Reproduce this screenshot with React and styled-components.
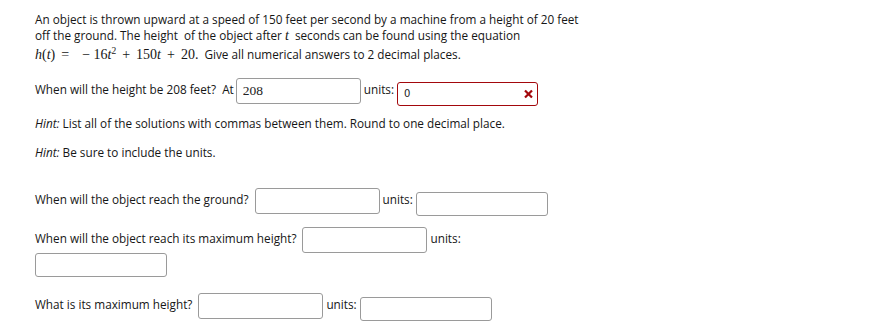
import React from "react";
import styled, { createGlobalStyle } from "styled-components";

const Global = createGlobalStyle`
  html, body { margin: 0; padding: 0; background: #fff; }
  body { font-family: "Open Sans", "Liberation Sans", sans-serif; color: #161616; }
`;

const Page = styled.div`
  width: 552px;
  padding: 11px 0 0 35px;
  font-size: 11.75px;
  line-height: 16px;
`;

const Para = styled.p`
  margin: ${(p) => p.$mt || 0}px 0 0 0;
  line-height: ${(p) => p.$lh || 16}px;
`;

const Math = styled.span`
  font-family: "Liberation Serif", "DejaVu Serif", serif;
  font-size: 14px;
  line-height: ${(p) => p.$lh || 16}px;
  margin-right: 6px;
`;

const V = styled.i`
  font-style: italic;
`;

const Sup = styled.sup`
  font-size: 9.5px;
  line-height: 0;
  vertical-align: 5px;
`;

const Op = styled.span`
  margin: 0 6px;
`;

const HintLabel = styled.i`
  font-style: italic;
`;

const AnswerInput = styled.input`
  box-sizing: border-box;
  width: 125px;
  height: 26px;
  margin: 0 3px 0 ${(p) => p.$ml ?? 2}px;
  padding: 0 6px;
  border: 1px solid #9a9a9a;
  border-radius: 3px;
  background: #fff;
  font-family: "Liberation Serif", "Times New Roman", serif;
  font-size: 13.5px;
  color: #222;
  vertical-align: middle;
  outline: none;
`;

const UnitsWrap = styled.span`
  position: relative;
  display: inline-block;
  vertical-align: middle;
  margin: ${(p) => (p.$wrapped ? "0" : "6px 0 0 3px")};
`;

const UnitsInput = styled.input`
  box-sizing: border-box;
  display: block;
  width: ${(p) => p.$w || 132}px;
  height: 24px;
  margin: 0;
  padding: 0 6px;
  border: 1px solid ${(p) => (p.$error ? "#a3080c" : "#9a9a9a")};
  border-radius: 3px;
  background: #fff;
  font-family: "DejaVu Sans", "Liberation Sans", sans-serif;
  font-size: 10px;
  color: #222;
  outline: none;
`;

const ErrorMark = styled.span`
  position: absolute;
  right: 5px;
  top: 50%;
  transform: translateY(-50%);
  display: flex;
`;

function Units({ value, error, w, wrapped }) {
  return (
    <UnitsWrap $wrapped={wrapped}>
      <UnitsInput defaultValue={value} $error={error} $w={w} />
      {error && (
        <ErrorMark>
          <svg width="9" height="9" viewBox="0 0 9 9">
            <path d="M1 1L8 8M8 1L1 8" stroke="#a3080c" strokeWidth="2.2" />
          </svg>
        </ErrorMark>
      )}
    </UnitsWrap>
  );
}

export default function App() {
  return (
    <>
      <Global />
      <Page>
        <Para>
          An object is thrown upward at a speed of 150 feet per second by a machine from a height of 20 feet off the ground. The height&nbsp; of the object after{" "}
          <Math><V>t</V></Math>seconds can be found using the equation{" "}
          <Math $lh={22}>
            <V>h</V>(<V>t</V>)<Op>=</Op>&nbsp;&nbsp;−&nbsp;16<V>t</V>
            <Sup>2</Sup><Op>+</Op>150<V>t</V><Op>+</Op>20.
          </Math>
          Give all numerical answers to 2 decimal places.
        </Para>

        <Para $mt={9} $lh={28}>
          When will the height be 208 feet?&nbsp; At
          <AnswerInput defaultValue="208" />
          units:
          <Units value="0" error w={141} />
        </Para>

        <Para $mt={9}>
          <HintLabel>Hint:</HintLabel> List all of the solutions with commas between them. Round to one decimal place.
        </Para>
        <Para $mt={13}>
          <HintLabel>Hint:</HintLabel> Be sure to include the units.
        </Para>

        <Para $mt={25} $lh={28}>
          When will the object reach the ground?
          <AnswerInput $ml={6} />
          units:
          <Units />
        </Para>

        <Para $mt={11} $lh={21}>
          When will the object reach its maximum height?
          <AnswerInput $ml={6} />
          units:{" "}
          <Units wrapped />
        </Para>

        <Para $mt={13} $lh={28}>
          What is its maximum height?
          <AnswerInput $ml={6} />
          units:
          <Units />
        </Para>
      </Page>
    </>
  );
}
